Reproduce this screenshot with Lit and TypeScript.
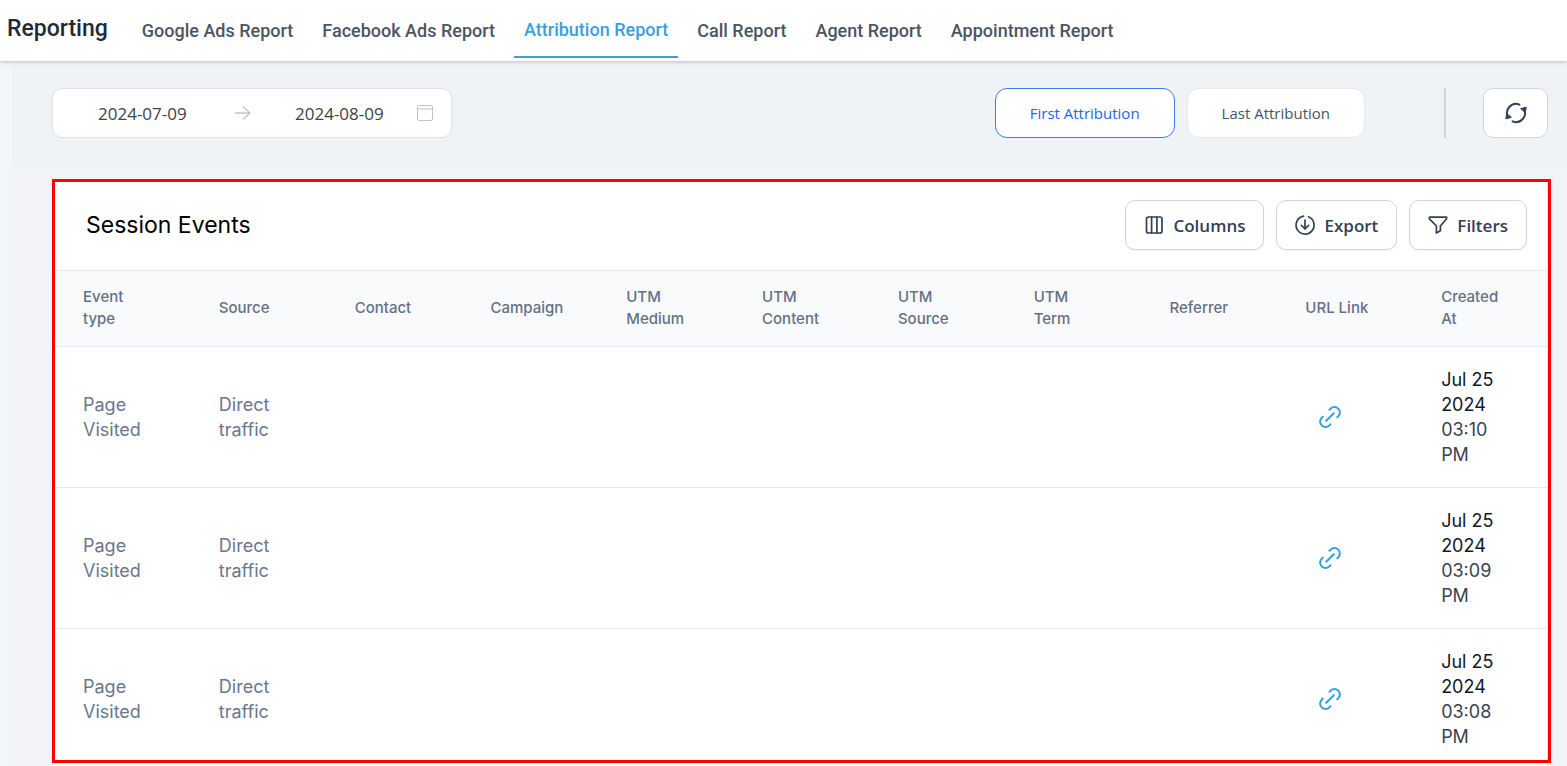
import { LitElement, html, css, svg } from "lit";
import { customElement, state } from "lit/decorators.js";
import { classMap } from "lit/directives/class-map.js";

const TABS = [
  "Google Ads Report",
  "Facebook Ads Report",
  "Attribution Report",
  "Call Report",
  "Agent Report",
  "Appointment Report",
];

const COLUMNS = [
  "Event type",
  "Source",
  "Contact",
  "Campaign",
  "UTM Medium",
  "UTM Content",
  "UTM Source",
  "UTM Term",
  "Referrer",
  "URL Link",
  "Created At",
];

interface SessionEvent {
  type: string;
  source: string;
  date: string;
  time: string;
}

const EVENTS: SessionEvent[] = [
  { type: "Page Visited", source: "Direct traffic", date: "Jul 25 2024", time: "03:10 PM" },
  { type: "Page Visited", source: "Direct traffic", date: "Jul 25 2024", time: "03:09 PM" },
  { type: "Page Visited", source: "Direct traffic", date: "Jul 25 2024", time: "03:08 PM" },
];

const icon = (body: unknown, size = 20) => html`
  <svg class="icon" width=${size} height=${size} viewBox="0 0 20 20" fill="none" stroke="currentColor"
    stroke-width="1.7" stroke-linecap="round" stroke-linejoin="round" aria-hidden="true">${body}</svg>`;

const columnsIcon = svg`<rect x="2.5" y="2" width="15.5" height="16" rx="2"/><path d="M7.6 2v16M12.9 2v16"/>`;
const exportIcon = svg`<path d="M8.6 1.2A9 9 0 1 0 13.6 1.8"/><path d="M10 5v9M6.4 10.4L10 14l3.6-3.6"/>`;
const filterIcon = svg`<path d="M1.4 2.2h17.2v1.6l-6.2 7.2v4.8l-4 2.2v-7l-7-7.2z"/>`;
const linkIcon = svg`<path d="M9.6 3.9l.9-.9a4.4 4.4 0 0 1 6.4 6.4l-.9.9M10.4 16.1l-.9.9a4.4 4.4 0 0 1-6.4-6.4l.9-.9M6.8 13.2l6.4-6.4"/>`;
const refreshIcon = svg`
  <path stroke-width="2" d="M13.4 1.6A9 9 0 0 0 2.2 14.4M6.6 18.4A9 9 0 0 0 17.8 5.6"/>
  <path fill="currentColor" stroke-width="1" d="M15 5.6l5.2-1.4-0.8 5zM5 14.4l-5.2 1.4 0.8-5z"/>`;

@customElement("app-root")
export class AppRoot extends LitElement {
  @state() private tab = "Attribution Report";
  @state() private mode = "First Attribution";

  static styles = css`
    :host {
      display: flex;
      flex-direction: column;
      height: 100vh;
      overflow: hidden;
      background: #f0f7fa;
      font-family: Inter, "Liberation Sans", sans-serif;
      color: #1d2939;
    }
    * {
      box-sizing: border-box;
    }
    button,
    input {
      font: inherit;
      color: inherit;
    }
    button {
      cursor: pointer;
    }
    .icon {
      flex: none;
      display: block;
      overflow: visible;
    }

    .topbar {
      display: flex;
      flex: none;
      height: 61px;
      padding-left: 7px;
      background: #fff;
      box-shadow: 0 1px 4px rgba(0, 0, 0, 0.22);
      font-family: Roboto, sans-serif;
      font-weight: 500;
      position: relative;
    }
    .title {
      margin: 0 24px 0 0;
      font-size: 23px;
      font-weight: 500;
      line-height: 58px;
      color: #1f2937;
    }
    .tabs {
      display: flex;
      gap: 9px;
    }
    .tab {
      height: 58px;
      padding: 3px 10px 0;
      border-bottom: 2px solid transparent;
      font-size: 18px;
      line-height: 56px;
      color: #4b5563;
      text-decoration: none;
      white-space: nowrap;
    }
    .tab.active {
      padding-top: 2px;
      color: #38a0db;
      border-color: #38a0db;
    }

    .page {
      display: flex;
      flex-direction: column;
      flex: 1;
      min-height: 0;
      margin-left: 12px;
      background: #f2f3f7;
    }
    .controls {
      display: flex;
      flex: none;
      align-items: center;
      padding: 27px 19px 26px 40px;
      background: #eff3f6;
      font-family: "Open Sans", "Noto Sans", sans-serif;
    }
    .range {
      display: flex;
      align-items: center;
      width: 400px;
      height: 50px;
      padding: 0 17px 0 45px;
      border: 1px solid #e0e0e8;
      border-radius: 10px;
      background: #fff;
      color: #c2c2c2;
    }
    .date {
      width: 112px;
      padding: 0;
      border: 0;
      outline: 0;
      background: none;
      font-size: 17px;
      color: #404246;
    }
    .arrow {
      margin: 0 44px 0 25px;
    }
    .calendar {
      margin-left: auto;
    }
    .right {
      display: flex;
      align-items: center;
      margin-left: auto;
    }
    .modes {
      display: flex;
      gap: 12px;
    }
    .mode {
      height: 50px;
      padding: 0 34px;
      border: 1px solid #e5e7eb;
      border-radius: 12px;
      background: #fff;
      font-size: 15px;
      color: #475467;
      white-space: nowrap;
    }
    .mode.active {
      border-color: #3b7bf0;
      color: #2563eb;
    }
    .divider {
      width: 2px;
      height: 50px;
      margin: 0 37px 0 79px;
      background: #d0d5dd;
    }
    .refresh {
      display: grid;
      place-items: center;
      width: 65px;
      height: 50px;
      padding: 0;
      border: 1px solid #d0d5dd;
      border-radius: 10px;
      background: #fff;
      color: #344054;
    }

    .highlight {
      position: relative;
      flex: 1;
      min-height: 0;
      margin: 15px 19px 0 40px;
    }
    .highlight::after {
      content: "";
      position: absolute;
      inset: 0 -3px 3px 0;
      border: 3px solid #f00;
      pointer-events: none;
    }
    .card {
      height: 100%;
      overflow: hidden;
      border: 1px solid #e5e7eb;
      border-bottom: 0;
      background: #fff;
    }
    .cardhead {
      display: flex;
      align-items: center;
      gap: 12px;
      padding: 20px 20px 20px 33px;
    }
    .cardtitle {
      margin: 0 auto 0 0;
      font-size: 23px;
      font-weight: 400;
      color: #000;
    }
    .tool {
      display: flex;
      align-items: center;
      gap: 9px;
      height: 50px;
      padding: 0 18px;
      border: 1px solid #d0d5dd;
      border-radius: 10px;
      background: #fff;
      box-shadow: 0 1px 2px rgba(16, 24, 40, 0.05);
      font-family: "Open Sans", "Noto Sans", sans-serif;
      font-size: 17px;
      font-weight: 600;
      color: #344054;
    }

    .events {
      width: 100%;
      border-collapse: separate;
      border-spacing: 0;
      table-layout: fixed;
    }
    th {
      padding: 15px 32px 16px 30px;
      border-top: 1px solid #e6e9ef;
      border-bottom: 1px solid #e6e9ef;
      background: #f9fafc;
      font-size: 15px;
      font-weight: 500;
      line-height: 22px;
      text-align: left;
      color: #667085;
    }
    td {
      padding: 20px 32px 20px 30px;
      border-bottom: 1px solid #e6e9ef;
      font-size: 18px;
      line-height: 25px;
      color: #6b768b;
    }
    .when {
      color: #3b4252;
    }
    .day {
      color: #111827;
    }
    .link {
      display: block;
      width: 24px;
      margin-left: 13px;
      color: #38a0db;
    }
  `;

  private renderRow(e: SessionEvent) {
    return html`
      <tr>
        <td>${e.type}</td>
        <td>${e.source}</td>
        <td></td><td></td><td></td><td></td><td></td><td></td><td></td>
        <td><a class="link" href="#" aria-label="Open URL">${icon(linkIcon, 24)}</a></td>
        <td class="when"><span class="day">${e.date}</span> ${e.time}</td>
      </tr>`;
  }

  render() {
    return html`
      <header class="topbar">
        <h1 class="title">Reporting</h1>
        <nav class="tabs">
          ${TABS.map(
            (t) => html`<a href="#" class=${classMap({ tab: true, active: t === this.tab })}
              @click=${(ev: Event) => { ev.preventDefault(); this.tab = t; }}>${t}</a>`
          )}
        </nav>
      </header>
      <main class="page">
        <div class="controls">
          <div class="range">
            <input class="date" aria-label="Start date" .value=${"2024-07-09"} />
            <svg class="icon arrow" width="16" height="16" viewBox="0 0 16 16" fill="none" stroke="currentColor"
              stroke-width="1.3" aria-hidden="true"><path d="M0 8h15M8 1.5L15 8l-7 6.5"/></svg>
            <input class="date" aria-label="End date" .value=${"2024-08-09"} />
            <svg class="icon calendar" width="18" height="18" viewBox="0 0 18 18" fill="none" stroke="currentColor"
              aria-hidden="true"><rect x="1.5" y="1.5" width="15" height="15" rx="1.5"/><path d="M1.5 5h15"/></svg>
          </div>
          <div class="right">
            <div class="modes">
              ${["First Attribution", "Last Attribution"].map(
                (m) => html`<button class=${classMap({ mode: true, active: m === this.mode })}
                  @click=${() => { this.mode = m; }}>${m}</button>`
              )}
            </div>
            <div class="divider"></div>
            <button class="refresh" aria-label="Refresh">${icon(refreshIcon)}</button>
          </div>
        </div>
        <div class="highlight">
          <section class="card">
            <div class="cardhead">
              <h2 class="cardtitle">Session Events</h2>
              <button class="tool">${icon(columnsIcon)}Columns</button>
              <button class="tool">${icon(exportIcon)}Export</button>
              <button class="tool">${icon(filterIcon)}Filters</button>
            </div>
            <table class="events">
              <thead>
                <tr>${COLUMNS.map((c) => html`<th scope="col">${c}</th>`)}</tr>
              </thead>
              <tbody>${EVENTS.map((e) => this.renderRow(e))}</tbody>
            </table>
          </section>
        </div>
      </main>
    `;
  }
}
